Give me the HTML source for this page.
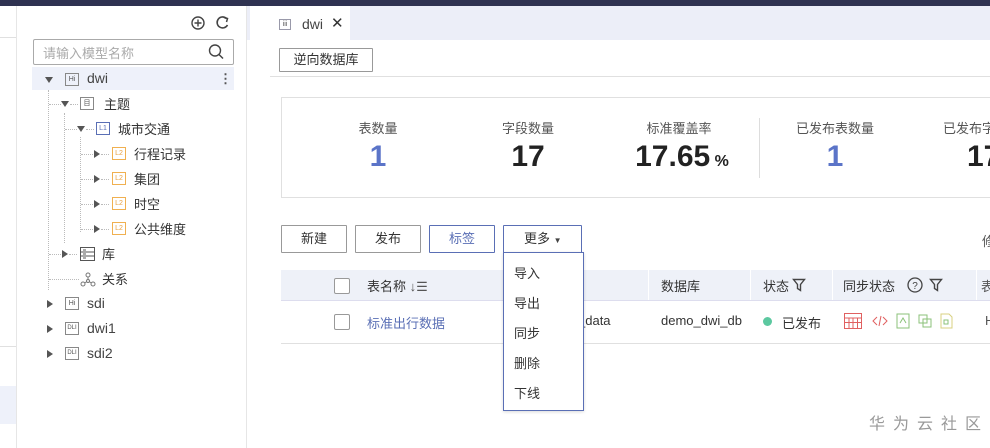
<!DOCTYPE html><html><head><meta charset="utf-8"><style>
*{box-sizing:border-box;margin:0;padding:0}
body{width:990px;height:448px;overflow:hidden;background:#fff;font-family:"Liberation Sans","Noto Sans CJK SC",sans-serif;font-size:13px;color:#333;position:relative}
.a{position:absolute}
.ic{position:absolute;border:1px solid #888;font-size:7px;line-height:11px;text-align:center;width:14px;height:13px;color:#555}
.l2{border-color:#f0b050;color:#e8a040}
.l1{border-color:#5a6fb5;color:#5a6fb5}
.tri{position:absolute;width:0;height:0}
.tr{border-left:6px solid #555;border-top:4px solid transparent;border-bottom:4px solid transparent}
.td{border-top:6px solid #555;border-left:4px solid transparent;border-right:4px solid transparent}
.dv{position:absolute;border-left:1px dotted #bbb}
.dh{position:absolute;border-top:1px dotted #bbb}
.btn{position:absolute;border:1px solid #999;background:#fff;text-align:center;font-size:13px;color:#333;border-radius:1px}
.lbl{position:absolute;font-size:13px;color:#555;text-align:center}
.num{position:absolute;font-size:30px;font-weight:bold;color:#222;text-align:center}
</style></head><body>
<div class="a" style="left:0;top:0;width:990px;height:6px;background:#2f3251"></div>
<div class="a" style="left:0;top:37px;width:16px;height:1px;background:#e0e0e0"></div>
<div class="a" style="left:0;top:346px;width:16px;height:1px;background:#e0e0e0"></div>
<div class="a" style="left:0;top:386px;width:16px;height:38px;background:#eef1fa"></div>
<div class="a" style="left:16px;top:6px;width:1px;height:442px;background:#e6e6e6"></div>
<div class="a" style="left:246px;top:6px;width:1px;height:442px;background:#e6e6e6"></div>
<svg class="a" style="left:190px;top:15px" width="44" height="18"><circle cx="8" cy="8" r="6" fill="none" stroke="#444" stroke-width="1.4"/><path d="M8 4.5v7M4.5 8h7" stroke="#444" stroke-width="1.4"/><path d="M36.5 3.5A5.5 5.5 0 1 0 37.5 10" fill="none" stroke="#444" stroke-width="1.6"/><path d="M34 2.5l3.5 1-1 3.5" fill="none" stroke="#444" stroke-width="1.5"/></svg>
<div class="a" style="left:33px;top:39px;width:201px;height:26px;border:1px solid #aaa;border-radius:2px"></div>
<div class="a" style="left:43px;top:43px;font-size:13px;color:#aaa">请输入模型名称</div>
<svg class="a" style="left:207px;top:43px" width="18" height="18"><circle cx="8" cy="7.5" r="5.5" fill="none" stroke="#444" stroke-width="1.4"/><path d="M12 11.5l4 4" stroke="#444" stroke-width="1.5"/></svg>
<div class="a" style="left:32px;top:67px;width:202px;height:23px;background:#eef1fa"></div>
<div class="tri td" style="left:45px;top:77px"></div>
<div class="ic" style="left:65px;top:73px">Hi</div>
<div class="a" style="left:87px;top:70px;font-size:14px;color:#444">dwi</div>
<div class="a" style="left:219px;top:71px;font-size:13px;color:#555;font-weight:bold">⋮</div>
<div class="dv" style="left:48px;top:90px;height:200px"></div>
<div class="dv" style="left:64px;top:113px;height:130px"></div>
<div class="dv" style="left:80px;top:137px;height:95px"></div>
<div class="dh" style="left:49px;top:104px;width:12px"></div>
<div class="tri td" style="left:61px;top:101px"></div>
<div class="dh" style="left:70px;top:104px;width:8px"></div>
<div class="ic" style="left:80px;top:97px">目</div>
<div class="a" style="left:104px;top:94px">主题</div>
<div class="dh" style="left:65px;top:129px;width:12px"></div>
<div class="tri td" style="left:77px;top:126px"></div>
<div class="dh" style="left:86px;top:129px;width:8px"></div>
<div class="ic l1" style="left:96px;top:122px">L1</div>
<div class="a" style="left:118px;top:119px">城市交通</div>
<div class="dh" style="left:81px;top:154px;width:12px"></div><div class="tri tr" style="left:94px;top:150px"></div><div class="dh" style="left:101px;top:154px;width:8px"></div><div class="ic l2" style="left:112px;top:147px">L2</div><div class="a" style="left:134px;top:144px">行程记录</div>
<div class="dh" style="left:81px;top:179px;width:12px"></div><div class="tri tr" style="left:94px;top:175px"></div><div class="dh" style="left:101px;top:179px;width:8px"></div><div class="ic l2" style="left:112px;top:172px">L2</div><div class="a" style="left:134px;top:169px">集团</div>
<div class="dh" style="left:81px;top:204px;width:12px"></div><div class="tri tr" style="left:94px;top:200px"></div><div class="dh" style="left:101px;top:204px;width:8px"></div><div class="ic l2" style="left:112px;top:197px">L2</div><div class="a" style="left:134px;top:194px">时空</div>
<div class="dh" style="left:81px;top:229px;width:12px"></div><div class="tri tr" style="left:94px;top:225px"></div><div class="dh" style="left:101px;top:229px;width:8px"></div><div class="ic l2" style="left:112px;top:222px">L2</div><div class="a" style="left:134px;top:219px">公共维度</div>
<div class="dh" style="left:49px;top:254px;width:12px"></div><div class="tri tr" style="left:62px;top:250px"></div><div class="dh" style="left:69px;top:254px;width:8px"></div>
<svg class="a" style="left:80px;top:247px" width="15" height="14"><rect x="0.5" y="0.5" width="14" height="13" fill="none" stroke="#555"/><path d="M0 5h15M0 9h15M3 3h3M3 7h3M3 11h3" stroke="#555"/></svg>
<div class="a" style="left:102px;top:244px">库</div>
<div class="dh" style="left:49px;top:279px;width:30px"></div>
<svg class="a" style="left:80px;top:272px" width="16" height="16" fill="none" stroke="#777"><circle cx="8" cy="3" r="2"/><circle cx="3" cy="12" r="2"/><circle cx="13" cy="12" r="2"/><circle cx="8" cy="9" r="1.5"/><path d="M8 5v3M4.5 11l2.5-1.5M11.5 11l-2.5-1.5"/></svg>
<div class="a" style="left:102px;top:269px">关系</div>
<div class="tri tr" style="left:47px;top:300px"></div><div class="ic" style="left:65px;top:297px">Hi</div><div class="a" style="left:87px;top:295px;font-size:14px;color:#444">sdi</div>
<div class="tri tr" style="left:47px;top:325px"></div><div class="ic" style="left:65px;top:322px;font-size:6px">DLI</div><div class="a" style="left:87px;top:320px;font-size:14px;color:#444">dwi1</div>
<div class="tri tr" style="left:47px;top:350px"></div><div class="ic" style="left:65px;top:347px;font-size:6px">DLI</div><div class="a" style="left:87px;top:345px;font-size:14px;color:#444">sdi2</div>
<div class="a" style="left:247px;top:6px;width:743px;height:34px;background:#eceef8"></div>
<div class="a" style="left:250px;top:6px;width:100px;height:34px;background:#fff"></div>
<div class="ic" style="left:279px;top:19px;border-color:#99a;width:12px;height:11px;line-height:9px">iii</div>
<div class="a" style="left:302px;top:16px;font-size:14px;color:#444">dwi</div>
<div class="a" style="left:331px;top:14px;font-size:15px;color:#333">✕</div>
<div class="btn" style="left:279px;top:48px;width:94px;height:24px;line-height:22px">逆向数据库</div>
<div class="a" style="left:270px;top:76px;width:720px;height:1px;background:#e0e0e0"></div>
<div class="a" style="left:281px;top:97px;width:720px;height:101px;border:1px solid #e0e0e0"></div>
<div class="lbl" style="left:328px;top:118px;width:100px">表数量</div>
<div class="num" style="left:328px;top:140px;width:100px;color:#5b74c8">1</div>
<div class="lbl" style="left:478px;top:118px;width:100px">字段数量</div>
<div class="num" style="left:478px;top:140px;width:100px">17</div>
<div class="lbl" style="left:629px;top:118px;width:100px">标准覆盖率</div>
<div class="num" style="left:622px;top:140px;width:120px">17.65<span style="font-size:16px"> %</span></div>
<div class="a" style="left:759px;top:118px;width:1px;height:60px;background:#ddd"></div>
<div class="lbl" style="left:785px;top:118px;width:100px">已发布表数量</div>
<div class="num" style="left:785px;top:140px;width:100px;color:#5b74c8">1</div>
<div class="lbl" style="left:943px;top:118px;width:100px;text-align:left">已发布字</div>
<div class="num" style="left:967px;top:140px;text-align:left">17</div>
<div class="btn" style="left:281px;top:225px;width:66px;height:28px;line-height:26px">新建</div>
<div class="btn" style="left:355px;top:225px;width:66px;height:28px;line-height:26px">发布</div>
<div class="btn" style="left:429px;top:225px;width:66px;height:28px;line-height:26px;border-color:#5a6fb5;color:#5a6fb5">标签</div>
<div class="btn" style="left:503px;top:225px;width:79px;height:28px;line-height:26px;border-color:#5a6fb5;text-align:left;padding-left:20px">更多 <span style="font-size:8px;color:#444">▼</span></div>
<div class="a" style="left:982px;top:231px;color:#555">修</div>
<div class="a" style="left:281px;top:270px;width:709px;height:30px;background:#eef1f8"></div>
<div class="a" style="left:281px;top:300px;width:709px;height:1px;background:#dde"></div>
<div class="a" style="left:281px;top:343px;width:709px;height:1px;background:#e0e0e0"></div>
<div class="a" style="left:334px;top:278px;width:16px;height:16px;border:1px solid #999;background:#fff;border-radius:2px"></div>
<div class="a" style="left:367px;top:276px;color:#333">表名称 <span style="color:#555">↓☰</span></div>
<div class="a" style="left:648px;top:270px;width:1px;height:30px;background:#fff"></div>
<div class="a" style="left:661px;top:276px">数据库</div>
<div class="a" style="left:750px;top:270px;width:1px;height:30px;background:#fff"></div>
<div class="a" style="left:763px;top:276px">状态</div>
<svg class="a" style="left:792px;top:278px" width="14" height="14"><path d="M1.5 1.5h11l-4 5v6l-3-2v-4z" fill="none" stroke="#444" stroke-width="1.4"/></svg>
<div class="a" style="left:832px;top:270px;width:1px;height:30px;background:#fff"></div>
<div class="a" style="left:843px;top:276px">同步状态</div>
<svg class="a" style="left:907px;top:277px" width="16" height="16"><circle cx="8" cy="8" r="7" fill="none" stroke="#444" stroke-width="1.3"/><text x="8" y="12" font-size="10" text-anchor="middle" fill="#444" font-family="Liberation Sans">?</text></svg>
<svg class="a" style="left:929px;top:278px" width="14" height="14"><path d="M1.5 1.5h11l-4 5v6l-3-2v-4z" fill="none" stroke="#444" stroke-width="1.4"/></svg>
<div class="a" style="left:976px;top:270px;width:1px;height:30px;background:#fff"></div>
<div class="a" style="left:981px;top:276px;color:#555">表</div>
<div class="a" style="left:334px;top:314px;width:16px;height:16px;border:1px solid #999;border-radius:2px"></div>
<div class="a" style="left:367px;top:313px;color:#5a6fb5">标准出行数据</div>
<div class="a" style="left:578px;top:313px;color:#333">_data</div>
<div class="a" style="left:661px;top:313px;color:#333">demo_dwi_db</div>
<div class="a" style="left:763px;top:317px;width:9px;height:9px;border-radius:50%;background:#5cc8a0"></div>
<div class="a" style="left:782px;top:313px">已发布</div>
<svg class="a" style="left:843px;top:312px" width="120" height="18" fill="none" stroke-width="1"><rect x="1.5" y="1.5" width="17" height="15" stroke="#e06060"/><path d="M1 6h18M1 10.5h18M6 6v11M10 6v11M14.5 6v11" stroke="#e06060"/><path d="M34 5l-4 4 4 4M40 5l4 4-4 4M38 4l-2 10" stroke="#e06060"/><rect x="54" y="2" width="12" height="14" stroke="#8bc27a"/><path d="M57 11l3-5 3 5" stroke="#8bc27a"/><rect x="76" y="3" width="8" height="8" stroke="#8bc27a"/><rect x="80" y="7" width="8" height="8" stroke="#8bc27a"/><path d="M98 2h8l3 3v11h-11z" stroke="#d8d080"/><rect x="101" y="8" width="4" height="4" stroke="#8bc27a"/></svg>
<div class="a" style="left:985px;top:313px;color:#555">H</div>
<div class="a" style="left:503px;top:252px;width:81px;height:159px;border:1px solid #5a6fb5;background:#fff;box-shadow:0 1px 3px rgba(0,0,0,.15)"></div>
<div class="a" style="left:514px;top:263px">导入</div>
<div class="a" style="left:514px;top:293px">导出</div>
<div class="a" style="left:514px;top:323px">同步</div>
<div class="a" style="left:514px;top:353px">删除</div>
<div class="a" style="left:514px;top:383px">下线</div>
<div class="a" style="left:869px;top:410px;font-size:16px;color:#999;letter-spacing:8px">华为云社区</div>
</body></html>
